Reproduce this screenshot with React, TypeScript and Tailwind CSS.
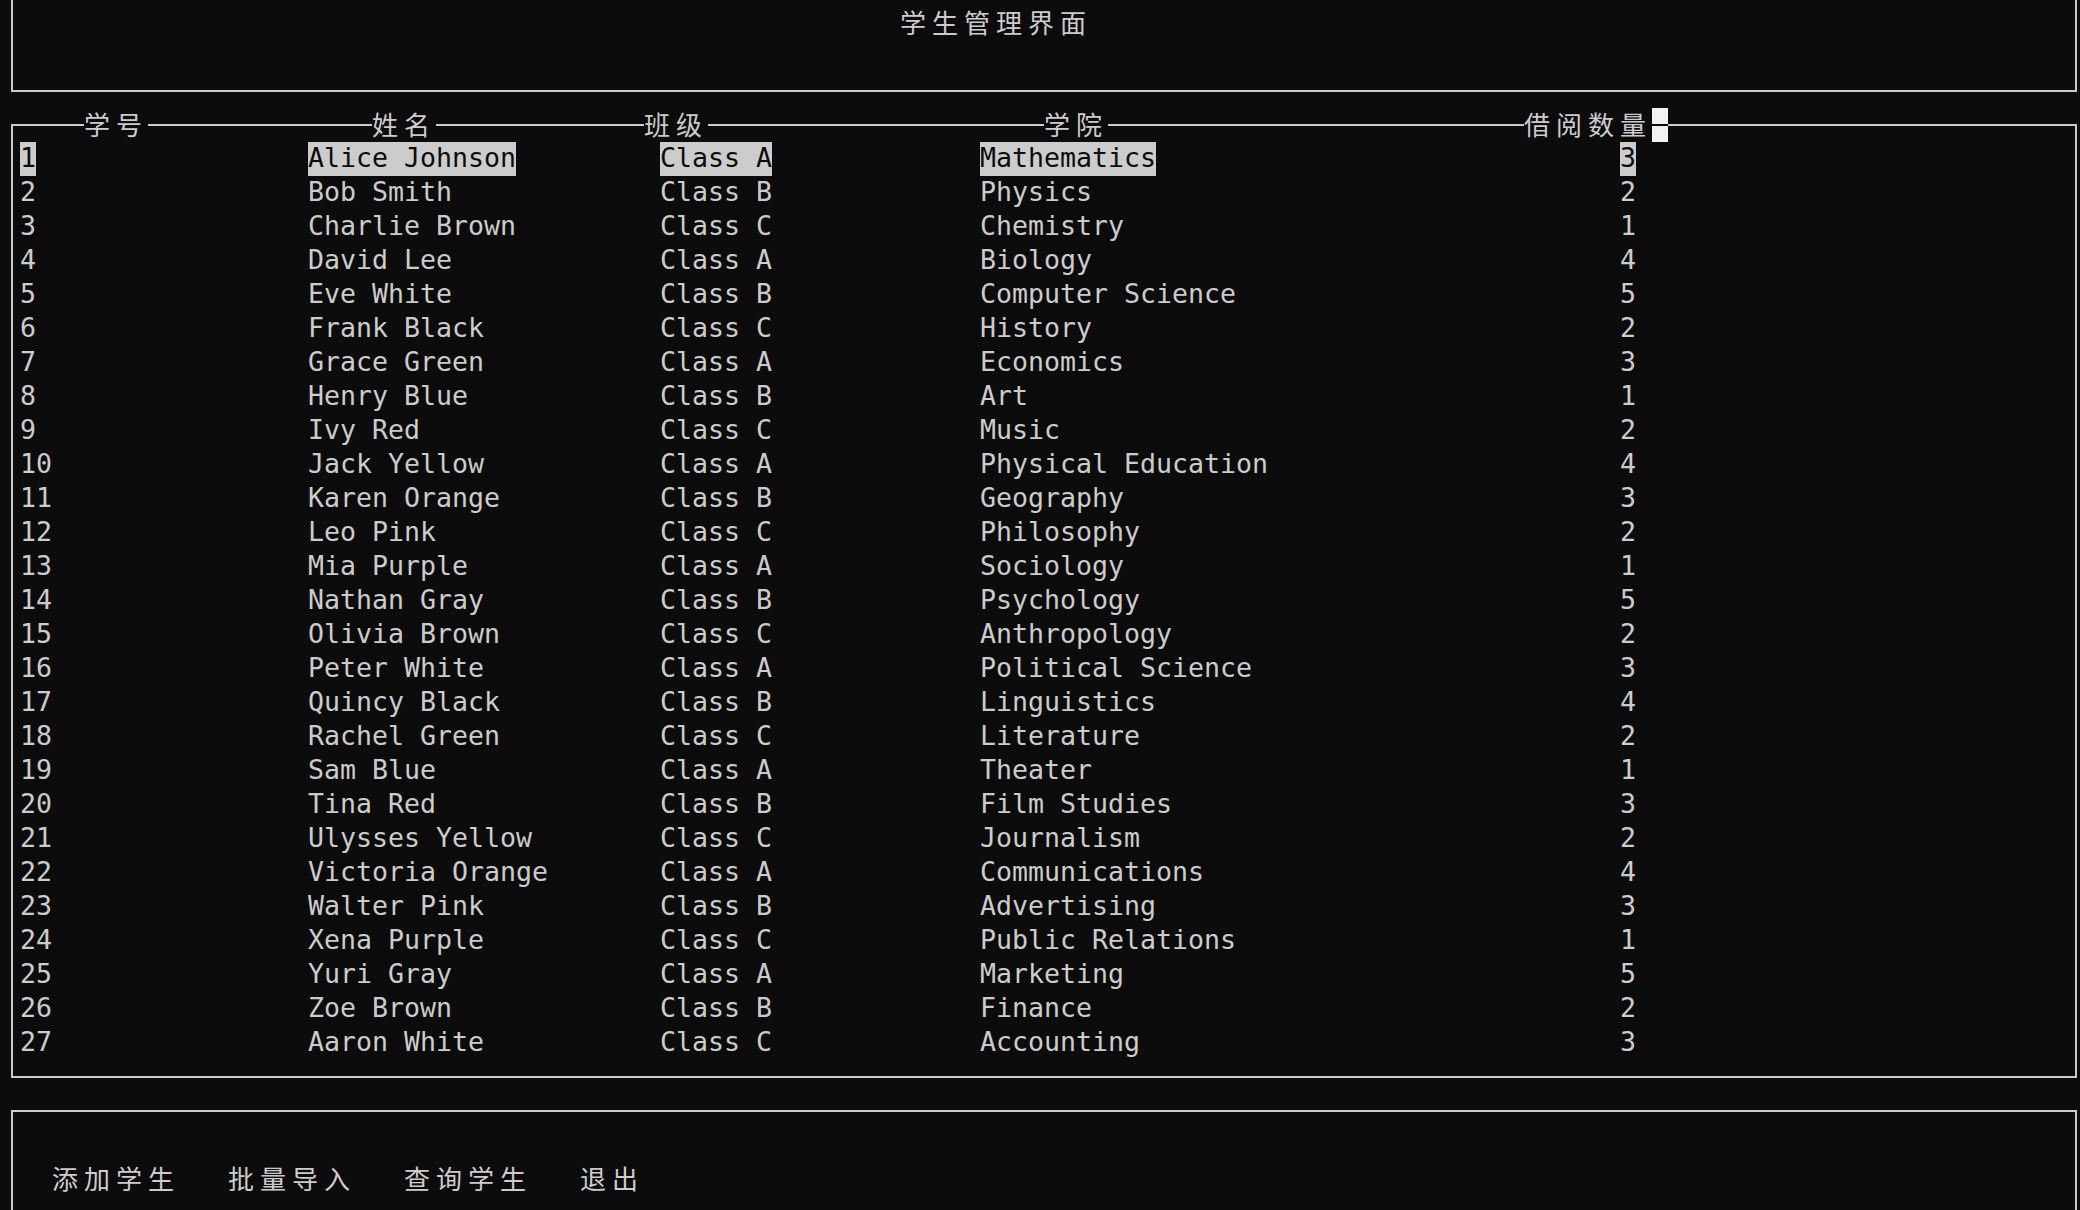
import React from "react";

type Row = [string, string, string, string, string];

const rows: Row[] = [
  ["1", "Alice Johnson", "Class A", "Mathematics", "3"],
  ["2", "Bob Smith", "Class B", "Physics", "2"],
  ["3", "Charlie Brown", "Class C", "Chemistry", "1"],
  ["4", "David Lee", "Class A", "Biology", "4"],
  ["5", "Eve White", "Class B", "Computer Science", "5"],
  ["6", "Frank Black", "Class C", "History", "2"],
  ["7", "Grace Green", "Class A", "Economics", "3"],
  ["8", "Henry Blue", "Class B", "Art", "1"],
  ["9", "Ivy Red", "Class C", "Music", "2"],
  ["10", "Jack Yellow", "Class A", "Physical Education", "4"],
  ["11", "Karen Orange", "Class B", "Geography", "3"],
  ["12", "Leo Pink", "Class C", "Philosophy", "2"],
  ["13", "Mia Purple", "Class A", "Sociology", "1"],
  ["14", "Nathan Gray", "Class B", "Psychology", "5"],
  ["15", "Olivia Brown", "Class C", "Anthropology", "2"],
  ["16", "Peter White", "Class A", "Political Science", "3"],
  ["17", "Quincy Black", "Class B", "Linguistics", "4"],
  ["18", "Rachel Green", "Class C", "Literature", "2"],
  ["19", "Sam Blue", "Class A", "Theater", "1"],
  ["20", "Tina Red", "Class B", "Film Studies", "3"],
  ["21", "Ulysses Yellow", "Class C", "Journalism", "2"],
  ["22", "Victoria Orange", "Class A", "Communications", "4"],
  ["23", "Walter Pink", "Class B", "Advertising", "3"],
  ["24", "Xena Purple", "Class C", "Public Relations", "1"],
  ["25", "Yuri Gray", "Class A", "Marketing", "5"],
  ["26", "Zoe Brown", "Class B", "Finance", "2"],
  ["27", "Aaron White", "Class C", "Accounting", "3"],
];

const cjk =
  "block h-[34px] leading-[32px] text-[26px] tracking-[6px] font-['Noto_Sans_CJK_SC','Noto_Sans',sans-serif] whitespace-nowrap";

function Cell({ text, hl }: { text: string; hl: boolean }) {
  return (
    <div className="flex h-[34px]">
      <span
        className={
          "block h-[34px] leading-[32px] whitespace-pre " +
          (hl ? "bg-[#cccccc] text-[#0c0c0c]" : "")
        }
      >
        {text}
      </span>
    </div>
  );
}

export default function App() {
  return (
    <div className="w-[2080px] h-[1210px] overflow-hidden bg-[#0c0c0c] text-[#cccccc] font-['DejaVu_Sans_Mono','Liberation_Mono',monospace] text-[26.58px]">
      {/* Top box: title */}
      <div className="ml-[11px] w-[2066px] border-x-2 border-b-2 border-[#cccccc] px-[7px] pt-[6px] pb-[16px]">
        <div className="flex h-[34px] pl-[880px]">
          <span className={cjk}>学生管理界面</span>
        </div>
        <div className="h-[34px]" />
      </div>

      {/* Table box */}
      <div className="mt-[32px] ml-[11px] w-[2066px] border-2 border-[#cccccc] px-[7px] pb-[16px]">
        <div className="-mt-[18px] flex h-[34px] items-stretch">
          <div className="w-[64px] shrink-0" />
          <span className={cjk + " bg-[#0c0c0c]"}>学号</span>
          <div className="w-[224px] shrink-0" />
          <span className={cjk + " bg-[#0c0c0c]"}>姓名</span>
          <div className="w-[208px] shrink-0" />
          <span className={cjk + " bg-[#0c0c0c]"}>班级</span>
          <div className="w-[336px] shrink-0" />
          <span className={cjk + " bg-[#0c0c0c]"}>学院</span>
          <div className="w-[416px] shrink-0" />
          <span className={cjk + " bg-[#0c0c0c]"}>借阅数量</span>
          <div className="flex h-[34px] w-[16px] shrink-0 items-center bg-[#f2f2f2]">
            <div className="h-[2px] w-full bg-[#0c0c0c]" />
          </div>
        </div>
        {rows.map((r, i) => (
          <div
            key={i}
            className="grid h-[34px] grid-cols-[288px_352px_320px_640px_1fr]"
          >
            {r.map((c, j) => (
              <Cell key={j} text={c} hl={i === 0} />
            ))}
          </div>
        ))}
      </div>

      {/* Bottom box: menu */}
      <div className="mt-[32px] ml-[11px] h-[200px] w-[2066px] border-x-2 border-t-2 border-[#cccccc] px-[7px] pt-[16px]">
        <div className="h-[34px]" />
        <div className="flex h-[34px] gap-[48px] pl-[32px]">
          <span className={cjk}>添加学生</span>
          <span className={cjk}>批量导入</span>
          <span className={cjk}>查询学生</span>
          <span className={cjk}>退出</span>
        </div>
      </div>
    </div>
  );
}
